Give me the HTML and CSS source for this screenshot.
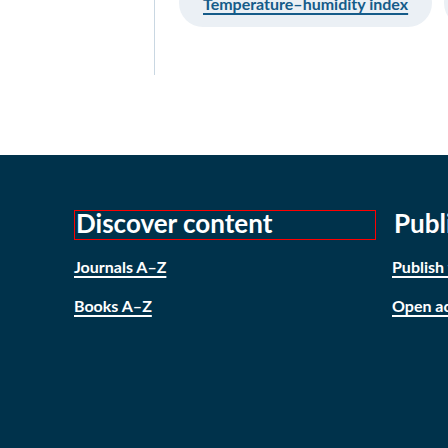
FILE: index.html
```html
<!DOCTYPE html>
<html lang="en">
<head>
<meta charset="utf-8">
<title>Footer</title>
<link rel="stylesheet" href="styles.css">
</head>
<body>
<div class="page">
  <section class="top">
    <div class="top-row">
      <aside class="side"></aside>
      <div class="pills">
        <a class="pill" href="#">Temperature–humidity index</a>
        <a class="pill" href="#">Heat stress</a>
      </div>
    </div>
  </section>
  <footer class="footer">
    <div class="cols">
      <div class="col">
        <h2 class="col-title">Discover content</h2>
        <ul class="links">
          <li><a href="#">Journals A–Z</a></li>
          <li><a href="#">Books A–Z</a></li>
        </ul>
      </div>
      <div class="col">
        <h2 class="col-title plain">Publish</h2>
        <ul class="links">
          <li><a href="#">Publish with us</a></li>
          <li><a href="#">Open access</a></li>
        </ul>
      </div>
    </div>
  </footer>
</div>
</body>
</html>
```
FILE: styles.css
```css
html, body {
  margin: 0;
  padding: 0;
  background: #ffffff;
  overflow: hidden;
}
body {
  width: 448px;
  height: 448px;
  font-family: Lato, "Liberation Sans", Arial, sans-serif;
}
.page {
  width: 448px;
  overflow: hidden;
}
.top {
  height: 155px;
  overflow: hidden;
}
.top-row {
  display: flex;
  margin-top: -21px;
}
.side {
  flex: 0 0 154px;
  height: 96px;
  border-right: 1px solid #c9d7e2;
}
.pills {
  display: flex;
  gap: 12px;
  padding-left: 24px;
  flex: 0 0 auto;
  align-items: flex-start;
}
.pill {
  display: block;
  flex: 0 0 auto;
  white-space: nowrap;
  background: #ebf0f5;
  border-radius: 24px;
  padding: 13px 24px 11px;
  line-height: 24px;
  font-size: 16px;
  font-weight: 700;
  color: #155b89;
  text-decoration: underline;
  text-decoration-thickness: 2px;
  text-underline-offset: 3px;
}
.footer {
  background: #00324b;
  height: 293px;
  padding: 55px 0 0 74px;
  box-sizing: border-box;
  color: #ffffff;
}
.cols {
  display: flex;
  gap: 16px;
  width: 800px;
}
.col {
  flex: 0 0 302px;
}
.col-title {
  margin: 0;
  font-size: 26px;
  line-height: 24px;
  padding: 0 0 4px 1px;
  font-weight: 700;
  border: 1px solid #ff0000;
  white-space: nowrap;
}
.col-title.plain {
  border-color: transparent;
}
.links {
  list-style: none;
  margin: 15px 0 0;
  padding: 0;
}
.links li {
  line-height: 24px;
  margin-bottom: 15px;
  font-size: 16px;
  font-weight: 700;
}
.links a {
  color: #ffffff;
  text-decoration: underline;
  text-decoration-thickness: 1.5px;
  text-underline-offset: 3px;
  white-space: nowrap;
}
```
